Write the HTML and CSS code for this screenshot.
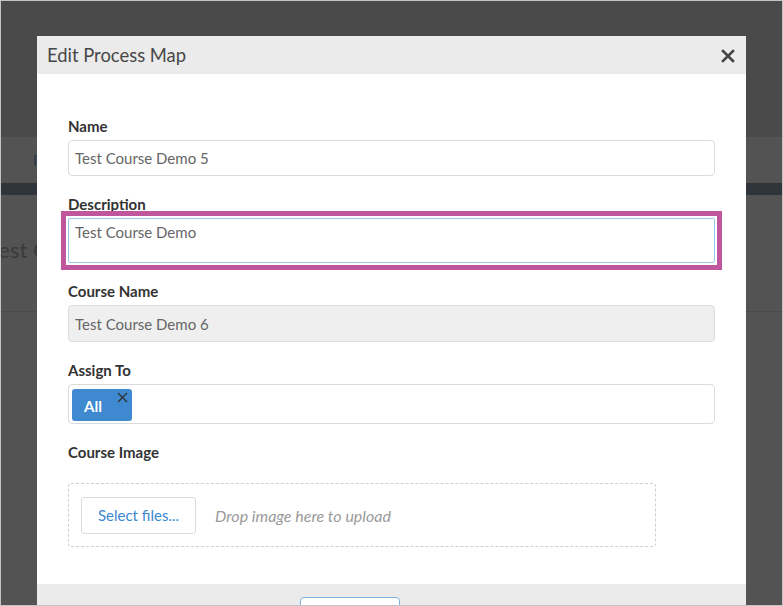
FILE: index.html
```html
<!DOCTYPE html>
<html>
<head>
<meta charset="utf-8">
<link rel="stylesheet" href="styles.css">
</head>
<body>
<div class="screen">
  <div class="page">
    <div class="pg-header"></div>
    <div class="pg-tabs"><span class="pg-tab">P</span></div>
    <div class="pg-band"></div>
    <div class="pg-content"><span class="pg-title">Test Course</span></div>
    <div class="pg-rule"></div>
  </div>

  <div class="modal">
    <div class="modal-head">
      <span class="modal-title">Edit Process Map</span>
      <span class="modal-close">
        <svg width="14" height="14" viewBox="0 0 14 14"><path d="M2 2L12 12M12 2L2 12" stroke="#444" stroke-width="2.6" stroke-linecap="square"/></svg>
      </span>
    </div>
    <div class="modal-body">
      <div class="group">
        <div class="label">Name</div>
        <div class="input">Test Course Demo 5</div>
      </div>
      <div class="group">
        <div class="label">Description</div>
        <div class="highlight">
          <div class="textarea">Test Course Demo</div>
        </div>
      </div>
      <div class="group">
        <div class="label">Course Name</div>
        <div class="input disabled">Test Course Demo 6</div>
      </div>
      <div class="group">
        <div class="label">Assign To</div>
        <div class="multi">
          <span class="chip">All
            <svg class="chip-x" width="11" height="11" viewBox="0 0 11 11"><path d="M1 1L10 10M10 1L1 10" stroke="#333" stroke-width="1.4"/></svg>
          </span>
        </div>
      </div>
      <div class="group last">
        <div class="label label-img">Course Image</div>
        <div class="dropzone">
          <span class="select-btn">Select files...</span>
          <span class="drop-hint">Drop image here to upload</span>
        </div>
      </div>
    </div>
    <div class="modal-foot">
      <span class="foot-btn"></span>
    </div>
  </div>
</div>
</body>
</html>
```

FILE: styles.css
```css
html, body {
  margin: 0;
  padding: 0;
}
body {
  font-family: Lato, "Liberation Sans", sans-serif;
  background: #535353;
}
.screen {
  position: relative;
  width: 783px;
  height: 606px;
  box-sizing: border-box;
  border: 1px solid #c4c4c4;
  overflow: hidden;
  background: #535353;
}
.page {
  display: flex;
  flex-direction: column;
}
.pg-header {
  height: 136px;
  background: #4a4a4a;
}
.pg-tabs {
  height: 46px;
  background: #535353;
  display: flex;
  align-items: center;
  padding-left: 32px;
}
.pg-tab {
  color: #2d3a4c;
  font-size: 15px;
}
.pg-band {
  height: 12px;
  background: #2f353b;
}
.pg-content {
  height: 116px;
  display: flex;
  align-items: center;
  padding-bottom: 8px;
  box-sizing: border-box;
}
.pg-title {
  margin-left: -13px;
  font-size: 22px;
  color: #3a3a3a;
}
.pg-rule {
  height: 1px;
  background: #4a4a4a;
}

.modal {
  position: absolute;
  left: 36px;
  top: 35px;
  width: 709px;
  background: #fff;
}
.modal-head {
  height: 38px;
  background: #ebebeb;
  display: flex;
  align-items: center;
  justify-content: space-between;
  padding: 0 11px 0 10px;
}
.modal-title {
  font-size: 18.4px;
  color: #474747;
}
.modal-close {
  display: flex;
  margin-top: 1px;
}
.modal-body {
  padding: 43px 31px 37px 31px;
}
.group {
  margin-bottom: 19px;
}
.group.last {
  margin-bottom: 0;
}
.label {
  font-size: 15px;
  font-weight: bold;
  color: #333;
  line-height: 18px;
  margin-bottom: 5px;
}
.label-img {
  margin-bottom: 22px;
}
.input {
  height: 36px;
  box-sizing: border-box;
  border: 1px solid #dcdcdc;
  border-radius: 4px;
  padding: 0 6px;
  display: flex;
  align-items: center;
  font-size: 15px;
  color: #666;
}
.input.disabled {
  height: 37px;
  background: #efefef;
}
.highlight {
  position: relative;
}
.highlight::after {
  content: "";
  position: absolute;
  left: -7px;
  right: -7px;
  top: -7px;
  bottom: -7px;
  border: 5px solid #c0579c;
}
.textarea {
  height: 45px;
  box-sizing: border-box;
  border: 1px solid #9cc4ea;
  border-radius: 2px;
  padding: 4px 6px;
  font-size: 15px;
  color: #666;
  line-height: 18px;
}
.multi {
  height: 40px;
  box-sizing: border-box;
  border: 1px solid #dcdcdc;
  border-radius: 4px;
  padding: 4px 3px;
  display: flex;
  align-items: flex-start;
}
.chip {
  position: relative;
  width: 60px;
  height: 32px;
  box-sizing: border-box;
  background: #3e89cf;
  border-radius: 3px;
  color: #fff;
  font-size: 15px;
  font-weight: bold;
  padding-left: 12px;
  display: flex;
  align-items: center;
  padding-top: 1px;
}
.chip-x {
  position: absolute;
  right: 4px;
  top: 3px;
}
.dropzone {
  width: 588px;
  height: 64px;
  box-sizing: border-box;
  border: 1px dashed #cfcfcf;
  border-radius: 3px;
  padding: 0 12px;
  display: flex;
  align-items: center;
  gap: 19px;
}
.select-btn {
  width: 115px;
  height: 37px;
  box-sizing: border-box;
  border: 1px solid #dcdcdc;
  border-radius: 3px;
  display: flex;
  align-items: center;
  justify-content: center;
  color: #3b88d0;
  font-size: 15px;
}
.drop-hint {
  font-style: italic;
  color: #9a9a9a;
  font-size: 16px;
}
.modal-foot {
  height: 40px;
  background: #ebebeb;
  padding-top: 13px;
  padding-left: 263px;
  box-sizing: border-box;
}
.foot-btn {
  display: block;
  width: 100px;
  height: 30px;
  box-sizing: border-box;
  background: #fff;
  border: 1px solid #7fb2e0;
  border-radius: 4px;
}
```
